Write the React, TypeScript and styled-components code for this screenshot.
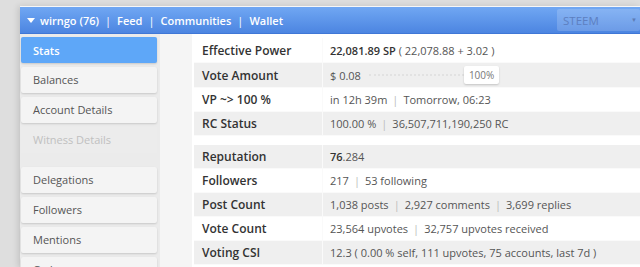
import styled, { createGlobalStyle } from "styled-components";

const GlobalStyle = createGlobalStyle`
  html, body {
    margin: 0;
    padding: 0;
    background: #dedede;
    font-family: "Open Sans", "Liberation Sans", sans-serif;
    overflow: hidden;
  }
`;

const Page = styled.div`
  padding: 6px 0 0 20px;
  height: 267px;
  box-sizing: border-box;
`;

const Frame = styled.div`
  background: #f4f4f4;
  border-top: 1px solid #f7f7f7;
  box-shadow: -2px 0 6px rgba(0, 0, 0, 0.12);
  height: 100%;
`;

const Header = styled.div`
  height: 26px;
  display: flex;
  align-items: center;
  background: linear-gradient(#70a7f3, #4c85e1);
  border-bottom: 1px solid #3f77d6;
  color: #fff;
  font-size: 11px;
  font-weight: 600;
  padding-left: 7px;
`;

const Caret = styled.span`
  width: 0;
  height: 0;
  border-left: 4.5px solid transparent;
  border-right: 4.5px solid transparent;
  border-top: 5px solid #fff;
  margin-right: 5px;
  margin-top: 1px;
`;

const NavSep = styled.span`
  margin: 0 6px;
  font-weight: 400;
`;

const Select = styled.div`
  margin-left: auto;
  width: 83px;
  height: 22px;
  display: flex;
  align-items: center;
  justify-content: space-between;
  padding: 0 3px 0 6px;
  box-sizing: border-box;
  background: rgba(255, 255, 255, 0.17);
  border-radius: 2px;
  color: #5d7fc0;
  font-size: 11.5px;
  font-weight: 400;
  span {
    font-size: 6px;
    color: #5c7cb5;
  }
`;

const Main = styled.div`
  display: flex;
  height: calc(100% - 27px);
`;

const Sidebar = styled.div`
  width: 140px;
  background: #ebebeb;
  padding: 3px 3px 0 1px;
  box-sizing: border-box;
  display: flex;
  flex-direction: column;
  gap: 4px;
`;

const SideButton = styled.div<{ active?: boolean; disabled?: boolean }>`
  height: 26px;
  flex-shrink: 0;
  display: flex;
  align-items: center;
  padding: 0 0 ${(p) => (p.active ? 0 : 2)}px 12px;
  box-sizing: border-box;
  border-radius: 2px;
  font-size: 11px;
  background: ${(p) => (p.active ? "#5ea7f8" : p.disabled ? "#ececec" : "#f4f4f4")};
  color: ${(p) => (p.active ? "#fff" : p.disabled ? "#c0c0c0" : "#555")};
  font-weight: ${(p) => (p.active ? 600 : 400)};
  box-shadow: ${(p) => (p.disabled ? "none" : "0 1px 2px rgba(0, 0, 0, 0.15)")};
`;

const SideGap = styled.div`
  height: 6px;
  flex-shrink: 0;
`;

const Spacer = styled.div`
  width: 32px;
  background: #f5f5f5;
`;

const Content = styled.div`
  flex: 1;
  background: #fff;
  padding: 4px 0 0 2px;
`;

const Table = styled.div`
  margin-bottom: 9px;
`;

const Row = styled.div<{ shade?: boolean; h: number }>`
  display: flex;
  height: ${(p) => p.h}px;
  align-items: stretch;
  background: ${(p) => (p.shade ? "#efefef" : "#fff")};
  border-bottom: 1px solid #fafafa;
  box-sizing: border-box;
`;

const Label = styled.div`
  width: 129px;
  flex-shrink: 0;
  display: flex;
  align-items: center;
  padding-left: 8px;
  box-sizing: border-box;
  border-right: 1px solid #fafafa;
  font-size: 12px;
  font-weight: 600;
  color: #333;
`;

const Value = styled.div`
  display: flex;
  align-items: center;
  padding-left: 7px;
  font-size: 11px;
  color: #555;
  white-space: nowrap;
`;

const Strong = styled.b`
  font-weight: 600;
  color: #333;
  margin-right: 3px;
`;

const Bold = styled.b`
  font-weight: 600;
  color: #333;
`;

const Sep = styled.span`
  color: #bbb;
  margin: 0 5px;
`;

const Bar = styled.div`
  width: 95px;
  margin-left: 8px;
  border-top: 2px dotted #e2e2e2;
`;

const Badge = styled.div`
  background: #fff;
  border-radius: 2px;
  box-shadow: 0 1px 2px rgba(0, 0, 0, 0.18);
  font-size: 10px;
  color: #777;
  padding: 2px 5px;
  line-height: 14px;
`;

function App() {
  const menuTop = ["Balances", "Account Details"];
  const menuBottom = ["Delegations", "Followers", "Mentions", "Orders"];
  return (
    <>
      <GlobalStyle />
      <Page>
        <Frame>
          <Header>
            <Caret />
            wirngo (76)
            <NavSep>|</NavSep>Feed<NavSep>|</NavSep>Communities
            <NavSep>|</NavSep>Wallet
            <Select>
              STEEM<span>▼</span>
            </Select>
          </Header>
          <Main>
            <Sidebar>
              <SideButton active>Stats</SideButton>
              {menuTop.map((m) => (
                <SideButton key={m}>{m}</SideButton>
              ))}
              <SideButton disabled>Witness Details</SideButton>
              <SideGap />
              {menuBottom.map((m) => (
                <SideButton key={m}>{m}</SideButton>
              ))}
            </Sidebar>
            <Spacer />
            <Content>
              <Table>
                <Row h={25}>
                  <Label>Effective Power</Label>
                  <Value>
                    <Strong>22,081.89 SP</Strong>( 22,078.88 + 3.02 )
                  </Value>
                </Row>
                <Row h={25} shade>
                  <Label>Vote Amount</Label>
                  <Value>
                    $ 0.08
                    <Bar />
                    <Badge>100%</Badge>
                  </Value>
                </Row>
                <Row h={24}>
                  <Label>VP ~&gt; 100 %</Label>
                  <Value>
                    in 12h 39m<Sep>|</Sep>Tomorrow, 06:23
                  </Value>
                </Row>
                <Row h={24} shade>
                  <Label>RC Status</Label>
                  <Value>
                    100.00 %<Sep>|</Sep>36,507,711,190,250 RC
                  </Value>
                </Row>
              </Table>
              <Table>
                <Row h={24} shade>
                  <Label>Reputation</Label>
                  <Value>
                    <Bold>76</Bold>.284
                  </Value>
                </Row>
                <Row h={24}>
                  <Label>Followers</Label>
                  <Value>
                    217<Sep>|</Sep>53 following
                  </Value>
                </Row>
                <Row h={24} shade>
                  <Label>Post Count</Label>
                  <Value>
                    1,038 posts<Sep>|</Sep>2,927 comments<Sep>|</Sep>3,699 replies
                  </Value>
                </Row>
                <Row h={24}>
                  <Label>Vote Count</Label>
                  <Value>
                    23,564 upvotes<Sep>|</Sep>32,757 upvotes received
                  </Value>
                </Row>
                <Row h={24} shade>
                  <Label>Voting CSI</Label>
                  <Value>12.3 ( 0.00 % self, 111 upvotes, 75 accounts, last 7d )</Value>
                </Row>
              </Table>
            </Content>
          </Main>
        </Frame>
      </Page>
    </>
  );
}

export default App;
